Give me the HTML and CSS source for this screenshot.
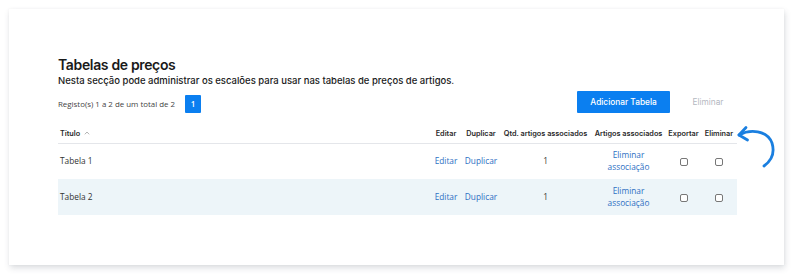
FILE: index.html
```html
<!DOCTYPE html>
<html lang="pt">
<head>
<meta charset="utf-8">
<link rel="stylesheet" href="styles.css">
</head>
<body>
<div class="card">
  <div class="content">
    <h1 class="title">Tabelas de preços</h1>
    <p class="subtitle">Nesta secção pode administrar os escalões para usar nas tabelas de preços de artigos.</p>
    <div class="toolbar">
      <div class="records">
        <span>Registo(s) 1 a 2 de um total de 2</span>
        <span class="page">1</span>
      </div>
      <div class="actions">
        <button class="btn-primary">Adicionar Tabela</button>
        <button class="btn-disabled">Eliminar</button>
      </div>
    </div>
    <div class="table-wrap">
      <table class="grid">
        <colgroup>
          <col class="c-title"><col class="c-edit"><col class="c-dup"><col class="c-qtd"><col class="c-art"><col class="c-exp"><col class="c-del">
        </colgroup>
        <thead>
          <tr>
            <th class="left">Título <svg class="caret" width="6" height="4" viewBox="0 0 6 4"><path d="M0.8 3.3 L3 1 L5.2 3.3" fill="none" stroke="#aaa" stroke-width="0.9"/></svg></th>
            <th>Editar</th>
            <th>Duplicar</th>
            <th>Qtd. artigos associados</th>
            <th>Artigos associados</th>
            <th>Exportar</th>
            <th>Eliminar</th>
          </tr>
        </thead>
        <tbody>
          <tr>
            <td class="left">Tabela 1</td>
            <td><a>Editar</a></td>
            <td><a>Duplicar</a></td>
            <td>1</td>
            <td><a>Eliminar<br>associação</a></td>
            <td><span class="chk"></span></td>
            <td><span class="chk"></span></td>
          </tr>
          <tr class="alt">
            <td class="left">Tabela 2</td>
            <td><a>Editar</a></td>
            <td><a>Duplicar</a></td>
            <td>1</td>
            <td><a>Eliminar<br>associação</a></td>
            <td><span class="chk"></span></td>
            <td><span class="chk"></span></td>
          </tr>
        </tbody>
      </table>
      <svg class="arrow" width="42" height="46" viewBox="0 0 42 46">
        <path d="M3 11 C 14 5, 31 6, 36 19 C 39 29, 35 37, 28 42" fill="none" stroke="#1a7fe0" stroke-width="2.8" stroke-linecap="round"/>
        <path d="M10 3.5 L3 11 L11.5 16" fill="none" stroke="#1a7fe0" stroke-width="2.8" stroke-linecap="round" stroke-linejoin="round"/>
      </svg>
    </div>
  </div>
</div>
</body>
</html>
```
FILE: styles.css
```css
* { box-sizing: border-box; }
html, body { margin: 0; padding: 0; background: #ffffff; }
body {
  width: 800px;
  height: 279px;
  padding: 9px 16px 14px 9px;
  font-family: "Open Sans", sans-serif;
  color: #333;
}
.card {
  width: 775px;
  height: 256px;
  background: #fff;
  box-shadow: 1px 3px 6px rgba(60, 70, 90, 0.18), 0 0 2px rgba(60, 70, 90, 0.06);
}
.content {
  padding: 47px 0 0 49px;
  width: 728px;
}
.title {
  margin: 0;
  font-family: "Inter", sans-serif;
  font-weight: 600;
  font-size: 14px;
  line-height: 18px;
  color: #1a1a1a;
  letter-spacing: -0.35px;
}
.subtitle {
  margin: 0;
  font-family: "Inter", sans-serif;
  font-weight: 500;
  font-size: 9.5px;
  line-height: 14px;
  color: #1a1a1a;
}
.toolbar {
  display: flex;
  justify-content: space-between;
  align-items: center;
  margin-top: 3px;
  width: 679px;
}
.records {
  display: flex;
  align-items: center;
  gap: 10px;
  font-size: 7.9px;
  color: #444;
  padding-top: 3px;
}
.page {
  display: inline-flex;
  align-items: center;
  justify-content: center;
  width: 16px;
  height: 18px;
  background: #0b7ff0;
  color: #fff;
  font-size: 8px;
  font-weight: 600;
  border-radius: 1px;
}
.actions {
  display: flex;
  align-items: center;
  margin-right: -9px;
}
.btn-primary {
  font-family: "Inter", sans-serif;
  width: 93px;
  height: 22px;
  background: #0b7ff0;
  color: #fff;
  border: none;
  font-size: 8.3px;
  font-weight: 500;
  border-radius: 1px;
  padding: 0;
}
.btn-disabled {
  font-family: "Inter", sans-serif;
  width: 76px;
  height: 22px;
  background: transparent;
  color: #b4b8bf;
  border: none;
  font-size: 8.3px;
  padding: 0;
}
.table-wrap {
  position: relative;
  margin-top: 11px;
  width: 679px;
}
.grid {
  width: 679px;
  border-collapse: collapse;
  table-layout: fixed;
}
.c-title { width: 372px; }
.c-edit { width: 32px; }
.c-dup { width: 38px; }
.c-qtd { width: 91px; }
.c-art { width: 75px; }
.c-exp { width: 35px; }
.c-del { width: 36px; }
th {
  font-family: "Inter", sans-serif;
  font-weight: 600;
  font-size: 7.3px;
  color: #2a2a2a;
  height: 19px;
  padding: 0;
  text-align: center;
  white-space: nowrap;
  border-bottom: 1.5px solid #e4e6ea;
  vertical-align: middle;
}
th.left, td.left { text-align: left; padding-left: 2px; }
.caret { margin-left: 2px; vertical-align: 1px; }
td {
  height: 36px;
  padding: 0;
  font-size: 8.3px;
  color: #333;
  text-align: center;
  vertical-align: middle;
  line-height: 12px;
}
td a { color: #2d6fc3; }
tr.alt td { background: #edf5f9; }
.chk {
  display: inline-block;
  width: 8px;
  height: 8px;
  border: 1px solid #777;
  border-radius: 2px;
  background: #fff;
  vertical-align: middle;
}
.arrow {
  position: absolute;
  left: 678px;
  top: 0;
}
```
